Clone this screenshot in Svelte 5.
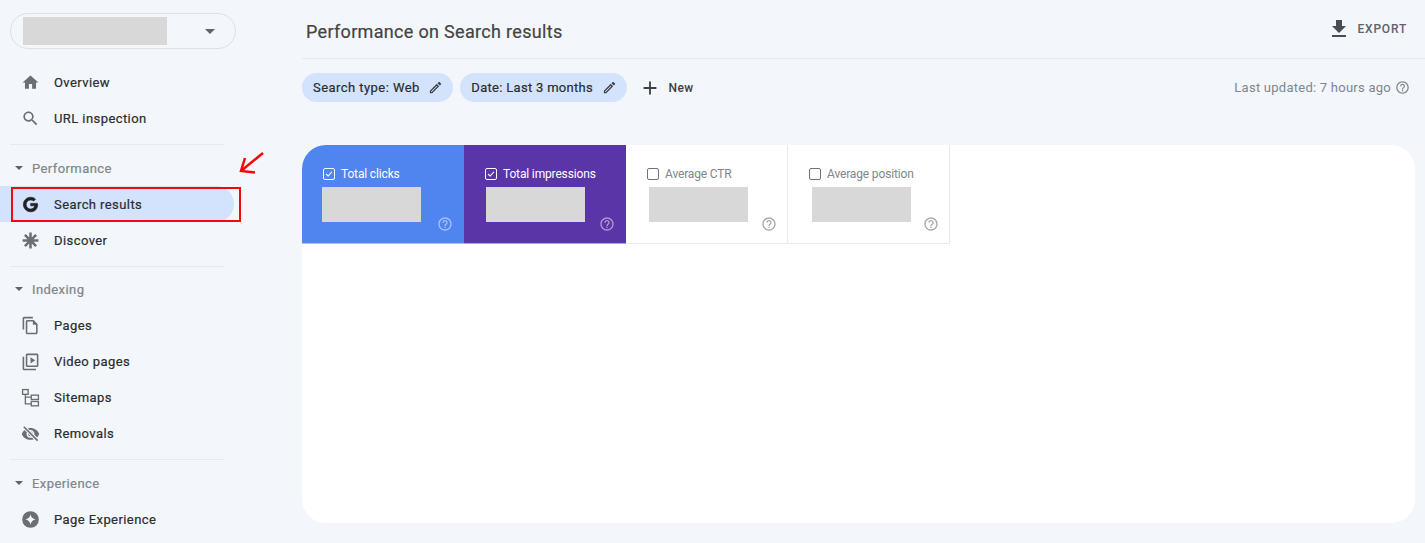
<script lang="ts">
	const G = 'M12.2 10.600v3.100h5.200c-.5 2.500-2.600 4-5.200 4-3.200 0-5.700-2.600-5.700-5.700s2.500-5.700 5.700-5.700c1.500 0 2.800.5 3.800 1.400l2.400-2.400C16.800 3.700 14.700 2.800 12.200 2.800 7.100 2.800 3 6.900 3 12s4.100 9.200 9.200 9.200c5.300 0 8.800-3.700 8.800-9 0-.6-.1-1.100-.2-1.600z';

	const topItems = [
		{ label: 'Overview', icon: 'home' },
		{ label: 'URL inspection', icon: 'search' }
	];

	const sections = [
		{
			title: 'Performance',
			items: [
				{ label: 'Search results', icon: 'google', active: true },
				{ label: 'Discover', icon: 'asterisk' }
			]
		},
		{
			title: 'Indexing',
			items: [
				{ label: 'Pages', icon: 'pages' },
				{ label: 'Video pages', icon: 'video' },
				{ label: 'Sitemaps', icon: 'sitemap' },
				{ label: 'Removals', icon: 'eye' }
			]
		},
		{
			title: 'Experience',
			items: [{ label: 'Page Experience', icon: 'star' }]
		}
	];

	const metrics = [
		{ label: 'Total clicks', cls: 'blue', checked: true },
		{ label: 'Total impressions', cls: 'purple', checked: true },
		{ label: 'Average CTR', cls: 'plain', checked: false },
		{ label: 'Average position', cls: 'plain', checked: false }
	];
</script>

{#snippet navIcon(name: string)}
	<svg class="nav-icon" class:dark={name === 'google'} viewBox="0 0 24 24" width="19" height="19" fill="currentColor">
		{#if name === 'home'}
			<path d="M10 20v-6h4v6h5v-8h3L12 3 2 12h3v8z" />
		{:else if name === 'search'}
			<path d="M15.500 14h-.8l-.3-.3c1-1.100 1.600-2.600 1.600-4.200C16 5.900 13.100 3 9.500 3S3 5.900 3 9.500 5.900 16 9.500 16c1.600 0 3.100-.6 4.200-1.600l.3.3v.8l5 5 1.500-1.500zm-6 0C7 14 5 12 5 9.500S7 5 9.500 5 14 7 14 9.500 12 14 9.500 14z" />
		{:else if name === 'google'}
			<path d={G} stroke="currentColor" stroke-width="0.8" />
		{:else if name === 'asterisk'}
			<path d="M12 2v20M2 12h20M4.900 4.900l14.200 14.200M19.100 4.900 4.900 19.100" stroke="currentColor" stroke-width="3.200" fill="none" />
		{:else if name === 'pages'}
			<path d="M15 1H4c-1.100 0-2 .9-2 2v14h2V3h11zm1 4H8c-1.100 0-2 .9-2 2v14c0 1.100.9 2 2 2h11c1.100 0 2-.9 2-2V10zm3 16H8V7h7v4h4z" />
		{:else if name === 'video'}
			<path d="M4 6H2v15c0 1.100.9 2 2 2h15v-2H4zm16-4H8c-1.100 0-2 .9-2 2v13c0 1.100.9 2 2 2h12c1.100 0 2-.9 2-2V4c0-1.100-.9-2-2-2zm0 15H8V4h12zM12 6.500v8l6-4z" />
		{:else if name === 'sitemap'}
			<g fill="none" stroke="currentColor" stroke-width="1.700">
				<rect x="2" y="2" width="7" height="6" />
				<rect x="13" y="9" width="9" height="5.500" />
				<rect x="13" y="17" width="9" height="5.500" />
				<path d="M5.500 8v12H13M5.500 11.500H13" />
			</g>
		{:else if name === 'eye'}
			<path d="M12 5C7 5 2.700 8.100 1 12.500 2.700 16.900 7 20 12 20s9.300-3.100 11-7.500C21.300 8.100 17 5 12 5zm0 12.500c-2.800 0-5-2.200-5-5s2.200-5 5-5 5 2.200 5 5-2.200 5-5 5zm0-8c-1.700 0-3 1.300-3 3s1.300 3 3 3 3-1.300 3-3-1.300-3-3-3z" />
			<path d="M3.500 3.500 21 21" stroke="#f3f6fb" stroke-width="4.500" />
			<path d="M3.500 3.500 21 21" stroke="currentColor" stroke-width="2" />
		{:else if name === 'star'}
			<path fill-rule="evenodd" d="M12 1.500a10.500 10.500 0 1 0 0 21 10.500 10.500 0 0 0 0-21zm0 4c.6 3.600 2.900 5.900 6.500 6.500-3.600.6-5.900 2.900-6.500 6.500-.6-3.600-2.900-5.900-6.500-6.500 3.600-.6 5.900-2.900 6.500-6.500z" />
		{/if}
	</svg>
{/snippet}

{#snippet helpIcon(size: number)}
	<svg class="help" viewBox="0 0 24 24" width={size} height={size} fill="currentColor">
		<path d="M11 18h2v-2h-2zm1-16C6.500 2 2 6.500 2 12s4.500 10 10 10 10-4.500 10-10S17.500 2 12 2zm0 18c-4.400 0-8-3.600-8-8s3.600-8 8-8 8 3.600 8 8-3.600 8-8 8zm0-14c-2.200 0-4 1.800-4 4h2c0-1.100.9-2 2-2s2 .9 2 2c0 2-3 1.800-3 5h2c0-2.300 3-2.500 3-5 0-2.200-1.800-4-4-4z" />
	</svg>
{/snippet}

{#snippet pencil()}
	<svg class="pencil" viewBox="0 0 24 24" width="15" height="15" fill="currentColor">
		<path d="M3 17.200V21h3.800L17.800 9.900l-3.800-3.800zM5.900 19H5v-.9l9-9 .9.9zM20.700 7c.4-.4.4-1 0-1.400l-2.300-2.300c-.4-.4-1-.4-1.400 0l-1.800 1.800 3.800 3.800z" />
	</svg>
{/snippet}

<div class="page">
	<aside class="sidebar">
		<div class="property">
			<div class="redacted name"></div>
			<span class="drop"></span>
		</div>

		<nav class="group first">
			{#each topItems as item}
				<div class="item">
					{@render navIcon(item.icon)}
					<span>{item.label}</span>
				</div>
			{/each}
		</nav>

		{#each sections as section}
			<nav class="group">
				<div class="section-title"><span class="caret"></span>{section.title}</div>
				{#each section.items as item}
					<div class="item" class:active={item.active}>
						{@render navIcon(item.icon)}
						<span>{item.label}</span>
					</div>
				{/each}
			</nav>
		{/each}
	</aside>

	<main class="main">
		<header class="top">
			<h1>Performance on Search results</h1>
			<div class="export">
				<svg viewBox="0 0 24 24" width="24" height="24" fill="currentColor"><path d="M19 9h-4V3H9v6H5l7 7zM5 18v2h14v-2z" /></svg>
				<span>EXPORT</span>
			</div>
		</header>

		<div class="filters">
			<div class="chip">Search type: Web {@render pencil()}</div>
			<div class="chip">Date: Last 3 months {@render pencil()}</div>
			<div class="new">
				<svg viewBox="0 0 24 24" width="22" height="22" fill="currentColor"><path d="M19 13h-6v6h-2v-6H5v-2h6V5h2v6h6z" /></svg>
				<span>New</span>
			</div>
			<div class="updated">Last updated: 7 hours ago {@render helpIcon(15)}</div>
		</div>

		<section class="card">
			<div class="metrics">
				{#each metrics as m}
					<div class="metric {m.cls}">
						<div class="metric-label">
							<span class="box">
								{#if m.checked}
									<svg viewBox="0 0 12 12" width="12" height="12" fill="none" stroke="currentColor" stroke-width="1.300"><path d="M2.500 6 5 8.500 9.500 3.500" /></svg>
								{/if}
							</span>
							{m.label}
						</div>
						<div class="redacted value"></div>
						<div class="metric-help">{@render helpIcon(16)}</div>
					</div>
				{/each}
			</div>
		</section>
	</main>

	<!-- annotation drawn over the screenshot -->
	<div class="mark-box"></div>
	<svg class="mark-arrow" viewBox="0 0 30 26" width="30" height="26" fill="none" stroke="#f20a0a" stroke-width="2.500">
		<path d="M25 3 3 21" />
		<path d="M7 8 3 21 17 22.500" />
	</svg>
</div>

<style>
	:global(body) {
		background: #f3f6fb;
	}

	.page {
		position: relative;
		display: flex;
		width: 1425px;
		height: 543px;
		overflow: hidden;
		background: #f3f6fb;
		font-family: Roboto, 'Liberation Sans', sans-serif;
		color: #202124;
	}

	.sidebar {
		flex: none;
		width: 302px;
		padding-top: 13px;
		box-sizing: border-box;
	}

	.property {
		display: flex;
		align-items: center;
		justify-content: space-between;
		box-sizing: border-box;
		width: 226px;
		height: 36px;
		margin-left: 10px;
		padding: 0 20px 0 12px;
		border: 1px solid #dde1e6;
		border-radius: 18px;
	}

	.redacted {
		background: #d8d8d8;
	}

	.name {
		width: 144px;
		height: 28px;
	}

	.drop {
		border-left: 5px solid transparent;
		border-right: 5px solid transparent;
		border-top: 5px solid #5f6368;
	}

	.group {
		width: 224px;
		padding-bottom: 8px;
	}

	.group.first {
		margin-top: 15px;
	}

	.group + .group {
		position: relative;
	}

	.group + .group::before {
		content: '';
		position: absolute;
		top: 0;
		left: 10px;
		right: 0;
		height: 1px;
		background: #e6e9ed;
	}

	.item {
		display: flex;
		align-items: center;
		width: 234px;
		height: 36px;
		padding-left: 20px;
		box-sizing: border-box;
		font-size: 13px;
		letter-spacing: 0.42px;
		color: #2b2d30;
		border-radius: 0 18px 18px 0;
		-webkit-text-stroke: 0.2px currentColor;
	}

	.item.active {
		background: #d3e3fd;
	}

	.nav-icon {
		flex: none;
		margin: 0 14.500px 0 0.500px;
		color: #6b6f74;
	}

	.nav-icon.dark {
		color: #202124;
	}

	.section-title {
		display: flex;
		align-items: center;
		height: 47px;
		padding-left: 15px;
		padding-top: 1px;
		margin-bottom: -5px;
		box-sizing: border-box;
		font-size: 13px;
		letter-spacing: 0.42px;
		color: #80868b;
		-webkit-text-stroke: 0.2px currentColor;
	}

	nav:nth-of-type(3) .section-title {
		height: 45px;
		margin-bottom: -4px;
	}

	.caret {
		width: 0;
		height: 0;
		margin-right: 9px;
		border-left: 4px solid transparent;
		border-right: 4px solid transparent;
		border-top: 4px solid #5f6368;
	}

	.main {
		flex: 1;
		min-width: 0;
	}

	.top {
		display: flex;
		align-items: center;
		justify-content: space-between;
		height: 59px;
		padding: 4px 18px 0 4px;
		box-sizing: border-box;
		border-bottom: 1px solid #e6e9ed;
	}

	h1 {
		margin: 0;
		font-size: 18px;
		font-weight: 400;
		letter-spacing: 0.32px;
		color: #444;
		-webkit-text-stroke: 0.2px currentColor;
	}

	.export {
		display: flex;
		align-items: center;
		gap: 6px;
		margin-top: -5px;
		font-size: 12px;
		font-weight: 500;
		letter-spacing: 0.8px;
		color: #5f6368;
	}

	.export svg {
		color: #4a4d51;
	}

	.filters {
		display: flex;
		align-items: center;
		height: 29px;
		margin-top: 14px;
		padding-right: 15px;
	}

	.chip {
		display: flex;
		align-items: center;
		justify-content: space-between;
		height: 29px;
		padding: 0 10px 0 11px;
		margin-right: 7px;
		border-radius: 15px;
		background: #d3e3fd;
		font-size: 13px;
		letter-spacing: 0.45px;
		color: #2b2d30;
		-webkit-text-stroke: 0.2px currentColor;
	}

	.chip + .chip {
		letter-spacing: 0.3px;
	}

	.pencil {
		margin-left: 8.500px;
		color: #3c4043;
	}

	.new {
		display: flex;
		align-items: center;
		gap: 8px;
		margin-left: 5px;
		font-size: 12px;
		font-weight: 500;
		letter-spacing: 0.3px;
		color: #3c4043;
	}

	.updated {
		display: flex;
		align-items: center;
		gap: 4px;
		margin-left: auto;
		font-size: 13px;
		letter-spacing: 0.25px;
		color: #80868b;
	}

	.card {
		height: 378px;
		width: 1113px;
		margin-top: 43px;
		background: #fff;
		border-radius: 24px;
		overflow: hidden;
	}

	.metrics {
		display: flex;
	}

	.metric {
		position: relative;
		box-sizing: border-box;
		width: 162px;
		height: 99px;
		padding: 22px 0 0 21px;
		border-bottom: 1px solid #e8eaed;
		border-right: 1px solid #e8eaed;
		color: #80868b;
	}

	.metric.blue {
		background: #5084ee;
		color: #fff;
		border-right: 0;
		border-bottom-color: #a9c4f6;
	}

	.metric.purple {
		background: #5935a8;
		color: #fff;
		border-right: 0;
		border-bottom-color: #b0a0d8;
	}

	.metric-label {
		display: flex;
		align-items: center;
		gap: 6px;
		height: 14px;
		font-size: 12px;
		letter-spacing: -0.15px;
	}

	.box {
		display: flex;
		align-items: center;
		justify-content: center;
		box-sizing: border-box;
		width: 12px;
		height: 12px;
		border: 1px solid #6f7378;
		border-radius: 2px;
	}

	.blue .box,
	.purple .box {
		border-color: #fff;
	}

	.value {
		width: 99px;
		height: 35px;
		margin-top: 6px;
		margin-left: -1px;
	}

	.purple .value {
		margin-left: 1px;
	}

	.plain .value {
		margin-left: 2px;
	}

	.plain:last-child .value {
		margin-left: 3px;
	}

	.metric-help {
		position: absolute;
		right: 11px;
		bottom: 11px;
		display: flex;
		opacity: 0.7;
	}

	.plain .metric-help {
		right: 10px;
	}

	.blue .metric-help,
	.purple .metric-help {
		opacity: 0.5;
	}

	.mark-box {
		position: absolute;
		left: 11px;
		top: 187px;
		width: 230px;
		height: 35px;
		box-sizing: border-box;
		border: 2px solid #f20a0a;
	}

	.mark-arrow {
		position: absolute;
		left: 238px;
		top: 150px;
	}
</style>
